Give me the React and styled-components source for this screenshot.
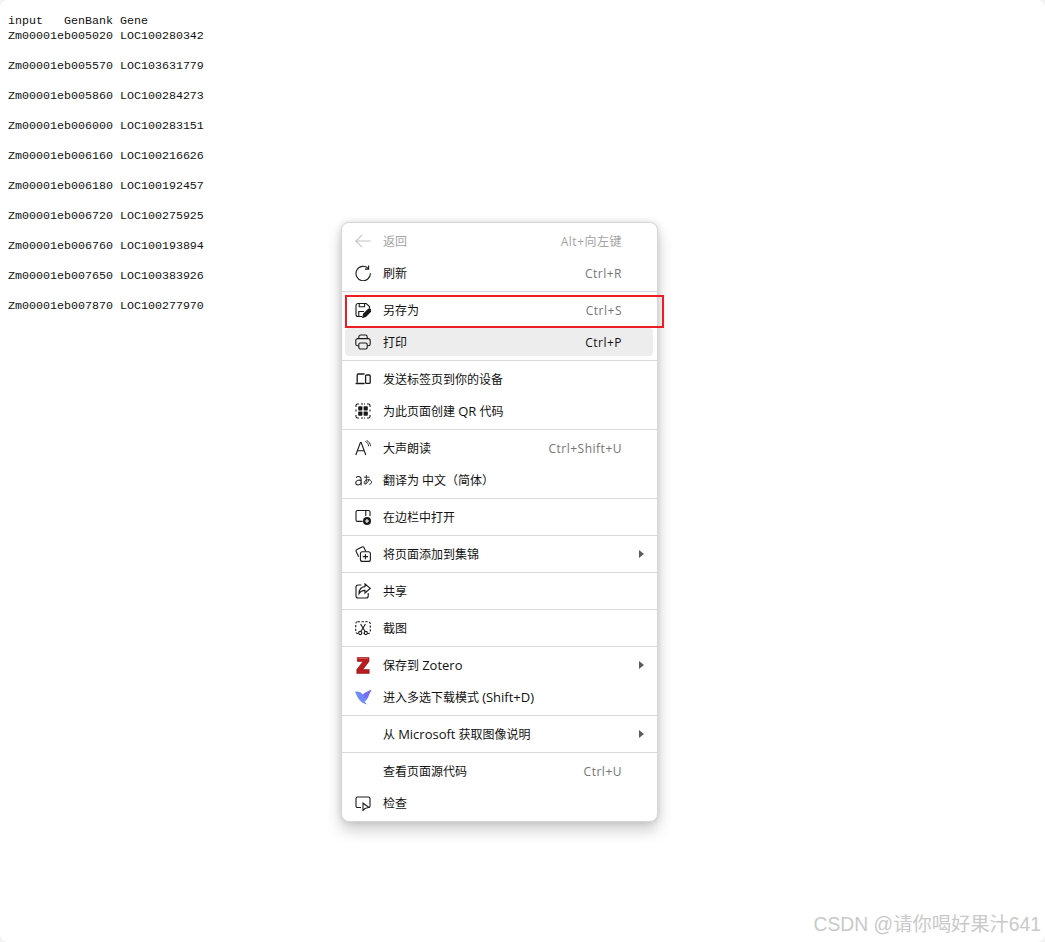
import React from "react";
import styled, { createGlobalStyle } from "styled-components";

const GlobalStyle = createGlobalStyle`
	html, body {
		margin: 0;
		padding: 0;
		background: #f3f3f3;
	}
`;

const Page = styled.div`
	position: relative;
	width: 1045px;
	height: 942px;
	overflow: hidden;
	background: #fff;
	border-radius: 8px;
`;

const Listing = styled.pre`
	margin: 0;
	padding: 14px 0 0 8px;
	font-family: "Liberation Mono", "Noto Sans CJK SC", monospace;
	font-size: 11.67px;
	line-height: 15px;
	color: #111;
	tab-size: 8;
`;

const Menu = styled.div`
	position: absolute;
	left: 341px;
	top: 222px;
	display: flex;
	flex-direction: column;
	box-sizing: border-box;
	width: 317px;
	padding: 2px 0;
	background: #fff;
	border: 1px solid #d6d6d6;
	border-radius: 8px;
	box-shadow: 0 8px 16px rgba(0, 0, 0, 0.2), 0 0 6px rgba(0, 0, 0, 0.12);
	font-family: "Open Sans", "Noto Sans CJK SC", sans-serif;
	font-size: 12px;
`;

const Row = styled.div`
	display: flex;
	flex: none;
	align-items: center;
	height: 28px;
	margin: 2px 4px 2px 3px;
	padding-left: 10px;
	border-radius: 4px;
	background: ${(p) => (p.$hover ? "#ededed" : "transparent")};
	color: ${(p) => (p.$disabled ? "#a3a3a3" : "#111")};
`;

const IconSlot = styled.span`
	display: flex;
	flex: none;
	width: 16px;
	height: 16px;
	margin-right: 12px;

	svg {
		flex: none;
	}
`;

const Label = styled.span`
	flex: 1;
	white-space: pre;
`;

const Latin = styled.span`
	font-size: 13px;
`;

const Shortcut = styled.span`
	margin-right: 31px;
	letter-spacing: 0.5px;
	color: ${(p) => (p.$hover ? "#111" : p.$disabled ? "#a3a3a3" : "#757575")};
`;

const Arrow = styled.span`
	width: 0;
	height: 0;
	margin-right: 9px;
	border-left: 5px solid #5c5c5c;
	border-top: 4px solid transparent;
	border-bottom: 4px solid transparent;
`;

const Divider = styled.div`
	flex: none;
	height: 1px;
	margin: 2px 0;
	background: #d9d9d9;
`;

const Highlight = styled.div`
	position: absolute;
	left: 345px;
	top: 295px;
	box-sizing: border-box;
	width: 319px;
	height: 33px;
	border: 2px solid #ee1c25;
`;

const Watermark = styled.div`
	position: absolute;
	right: 4px;
	bottom: 5px;
	font-family: "Liberation Sans", "Noto Sans CJK SC", sans-serif;
	font-size: 19.3px;
	line-height: 24px;
	color: #c9c9c9;
`;

const Svg = ({ children }) => (
	<svg width="16" height="16" viewBox="0 0 16 16" fill="none" stroke="#1a1a1a" strokeWidth="1.1">
		{children}
	</svg>
);

const BackIcon = () => (
	<svg width="16" height="16" viewBox="0 0 18 18" fill="none" stroke="#c4c4c4" strokeWidth="1.2">
		<path d="M0.8 9H17.6M8 2 0.8 9l7.2 7" />
	</svg>
);
const RefreshIcon = () => (
	<Svg>
		<path d="M13.200 3.300A7.200 7.200 0 1 0 15.400 8.200" />
		<path d="M13.600 0.500v3.600H10" />
	</Svg>
);
const SaveIcon = () => (
	<Svg>
		<path d="M7 14.500H3a2 2 0 0 1-2-2v-9a2 2 0 0 1 2-2h8.200L14.500 4.600V6.500" />
		<path d="M4.200 1.500v3.200h5.400V1.500M3.800 14v-4.500H9" />
		<path d="M7.800 15.400 8.600 12 13.200 7.500a1.400 1.400 0 0 1 2.200 2.100L10.900 14.200Z" fill="#1a1a1a" />
	</Svg>
);
const PrintIcon = () => (
	<Svg>
		<path d="M3.800 4.600V2.800a1.800 1.800 0 0 1 1.800-1.800h4.800a1.800 1.800 0 0 1 1.800 1.800v1.800" />
		<path d="M3.600 11.800H2.600A1.800 1.800 0 0 1 .8 10V6.600a2 2 0 0 1 2-2h10.400a2 2 0 0 1 2 2V10a1.800 1.800 0 0 1-1.800 1.800h-1" />
		<rect x="3.800" y="9" width="8.400" height="6" rx="1.400" />
	</Svg>
);
const DevicesIcon = () => (
	<Svg>
		<path d="M9.500 3H3.200a1 1 0 0 0-1 1v7.500M.6 12.500h9" strokeWidth="1.300" />
		<rect x="10.600" y="4" width="4.600" height="8.400" rx="1" strokeWidth="1.300" />
	</Svg>
);
const QrIcon = () => (
	<Svg>
		<path d="M1 4V2.400A1.400 1.400 0 0 1 2.400 1H4M12 1h1.600A1.400 1.400 0 0 1 15 2.400V4M15 12v1.600a1.400 1.400 0 0 1-1.400 1.400H12M4 15H2.400A1.400 1.400 0 0 1 1 13.600V12" />
		<path d="M6 1h4M6 15h4M1 6.500v3M15 6.500v3" strokeDasharray="2 1" />
		<g fill="#1a1a1a" stroke="none">
			<rect x="3.200" y="3.200" width="4.200" height="4.200" rx=".7" />
			<rect x="8.600" y="3.200" width="4.200" height="4.200" rx=".7" />
			<rect x="3.200" y="8.600" width="4.200" height="4.200" rx=".7" />
			<rect x="8.600" y="8.600" width="4.200" height="4.200" rx=".7" />
		</g>
	</Svg>
);
const ReadIcon = () => (
	<Svg>
		<path d="M.8 15 5.400 2.600h.8L10.800 15M2.400 10.800h6.800" />
		<path d="M10.400 1.400c2 1 3 2.600 3.200 4.800M11.600 0.400c2.600 1.400 3.800 3.400 4 5.800" strokeWidth=".9" />
	</Svg>
);
const TranslateIcon = () => (
	<svg width="17" height="16" viewBox="0 0 18 16" fill="none" stroke="#1a1a1a" strokeWidth="1.100">
		<path d="M1.200 5.400C2.200 4.400 3.600 4.200 4.800 4.600c1.200.4 1.700 1.400 1.700 2.600v6.600" />
		<path d="M6.500 8.400C4.400 7.800 1 8.200.8 10.800c-.2 3 4.200 3.400 5.700 0" />
		<path d="M9.400 5h6M12 2.800c.1 3.400-.2 7.400-.4 9.600M15 6.800c-1.200 4-3.400 6-4.800 5.400-1.300-.7-.6-3.700 2.800-4.400 2.500-.4 4.700.7 4.500 2.600-.1 1.200-1.100 2-2.500 2.200" strokeWidth=".95" />
	</svg>
);
const SidebarIcon = () => (
	<Svg>
		<path d="M7.600 12.400H2.400A1.400 1.400 0 0 1 1 11V2.900A1.400 1.400 0 0 1 2.400 1.500h11.200A1.400 1.400 0 0 1 15 2.900V7M10.800 1.500v5.500" />
		<circle cx="12" cy="12" r="4" fill="#1a1a1a" stroke="none" />
		<path d="M12 10v4M10 12h4" stroke="#fff" />
	</Svg>
);
const CollectionIcon = () => (
	<Svg>
		<rect x="5.400" y="5.800" width="10" height="9.600" rx="2" />
		<path d="M10.400 8v5.200M7.800 10.600H13" />
		<path d="M3.600 10.800 1.200 5.600a1.600 1.600 0 0 1 .8-2.100L7 1a1.600 1.600 0 0 1 2.100.7l1.600 3.500" />
	</Svg>
);
const ShareIcon = () => (
	<Svg>
		<path d="M6.400 2H3a2 2 0 0 0-2 2v9a2 2 0 0 0 2 2h8.200a2 2 0 0 0 2-2v-3" />
		<path d="M10 .8 15.200 5.400 10 10V7.400C7.400 7.400 5.400 8.400 4 10.800c0-4 2-6.800 6-7.200Z" />
	</Svg>
);
const ScreenshotIcon = () => (
	<Svg>
		<rect x=".7" y="1.700" width="14.600" height="11.800" rx="2" strokeDasharray="2.300 1.500" />
		<path d="M5.600 4 9.800 11M10.400 4 6.200 11" />
		<circle cx="5.200" cy="13" r="1.600" fill="#fff" />
		<circle cx="10.800" cy="13" r="1.600" fill="#fff" />
	</Svg>
);
const ZoteroIcon = () => (
	<svg width="16" height="17" viewBox="0 0 16 17">
		<path d="M2.300 .5h11.700v3.900L7.900 12.500h6.300v3.900H1.800v-3.900L8 4.400H2.300Z" fill="#b81c21" stroke="#8f1216" strokeWidth=".6" />
		<path d="M3.200 1.500h9.800" stroke="#e0575a" strokeWidth=".8" />
	</svg>
);
const SwallowIcon = () => (
	<svg width="17" height="16" viewBox="0 0 17 16">
		<path d="M0 2.700C3.600 2.300 6.200 3.400 8 5.500 10.200 3.500 13 2 16.400 1 14.800 3.800 13.600 6.500 12.700 9 11.700 11 10.800 12 9.500 12.500L12 15.400C8.800 14.800 6.500 13.600 5.400 12 3 9.500 1.500 6 0 2.700Z" fill="#6e8bfb" />
		<path d="M8 5.500C10.200 3.500 13 2 16.400 1 14.800 3.800 13.600 6.500 12.700 9 11 10 9 8.500 8 5.500Z" fill="#7a6cf6" />
	</svg>
);
const InspectIcon = () => (
	<Svg>
		<path d="M6 12.500H2.500A1.500 1.500 0 0 1 1 11V3.500A1.500 1.500 0 0 1 2.500 2h11A1.500 1.500 0 0 1 15 3.500V11a1.500 1.500 0 0 1-1.500 1.500h-.5" />
		<path d="M8 8.200v7.200l2-1.800 3.800-1.200Z" fill="#fff" />
	</Svg>
);

const lines = [
	"input\tGenBank\tGene",
	"Zm00001eb005020\tLOC100280342\n",
	"Zm00001eb005570\tLOC103631779\n",
	"Zm00001eb005860\tLOC100284273\n",
	"Zm00001eb006000\tLOC100283151\n",
	"Zm00001eb006160\tLOC100216626\n",
	"Zm00001eb006180\tLOC100192457\n",
	"Zm00001eb006720\tLOC100275925\n",
	"Zm00001eb006760\tLOC100193894\n",
	"Zm00001eb007650\tLOC100383926\n",
	"Zm00001eb007870\tLOC100277970",
];

// null marks a divider between groups
const items = [
	{ icon: <BackIcon />, label: "返回", shortcut: "Alt+向左键", disabled: true },
	{ icon: <RefreshIcon />, label: "刷新", shortcut: "Ctrl+R" },
	null,
	{ icon: <SaveIcon />, label: "另存为", shortcut: "Ctrl+S" },
	{ icon: <PrintIcon />, label: "打印", shortcut: "Ctrl+P", hover: true },
	null,
	{ icon: <DevicesIcon />, label: "发送标签页到你的设备" },
	{ icon: <QrIcon />, label: <>为此页面创建 <Latin>QR</Latin> 代码</> },
	null,
	{ icon: <ReadIcon />, label: "大声朗读", shortcut: "Ctrl+Shift+U" },
	{ icon: <TranslateIcon />, label: "翻译为 中文（简体）" },
	null,
	{ icon: <SidebarIcon />, label: "在边栏中打开" },
	null,
	{ icon: <CollectionIcon />, label: "将页面添加到集锦", submenu: true },
	null,
	{ icon: <ShareIcon />, label: "共享" },
	null,
	{ icon: <ScreenshotIcon />, label: "截图" },
	null,
	{ icon: <ZoteroIcon />, label: <>保存到 <Latin>Zotero</Latin></>, submenu: true },
	{ icon: <SwallowIcon />, label: <>进入多选下载模式 <Latin>(Shift+D)</Latin></> },
	null,
	{ label: <>从 <Latin>Microsoft</Latin> 获取图像说明</>, submenu: true },
	null,
	{ label: "查看页面源代码", shortcut: "Ctrl+U" },
	{ icon: <InspectIcon />, label: "检查" },
];

export default function App() {
	return (
		<Page>
			<GlobalStyle />
			<Listing>{lines.join("\n")}</Listing>
			<Menu>
				{items.map((item, i) =>
					item ? (
						<Row key={i} $hover={item.hover} $disabled={item.disabled}>
							<IconSlot>{item.icon}</IconSlot>
							<Label>{item.label}</Label>
							{item.shortcut && (
								<Shortcut $hover={item.hover} $disabled={item.disabled}>
									{item.shortcut}
								</Shortcut>
							)}
							{item.submenu && <Arrow />}
						</Row>
					) : (
						<Divider key={i} />
					),
				)}
			</Menu>
			<Highlight />
			<Watermark>CSDN @请你喝好果汁641</Watermark>
		</Page>
	);
}
